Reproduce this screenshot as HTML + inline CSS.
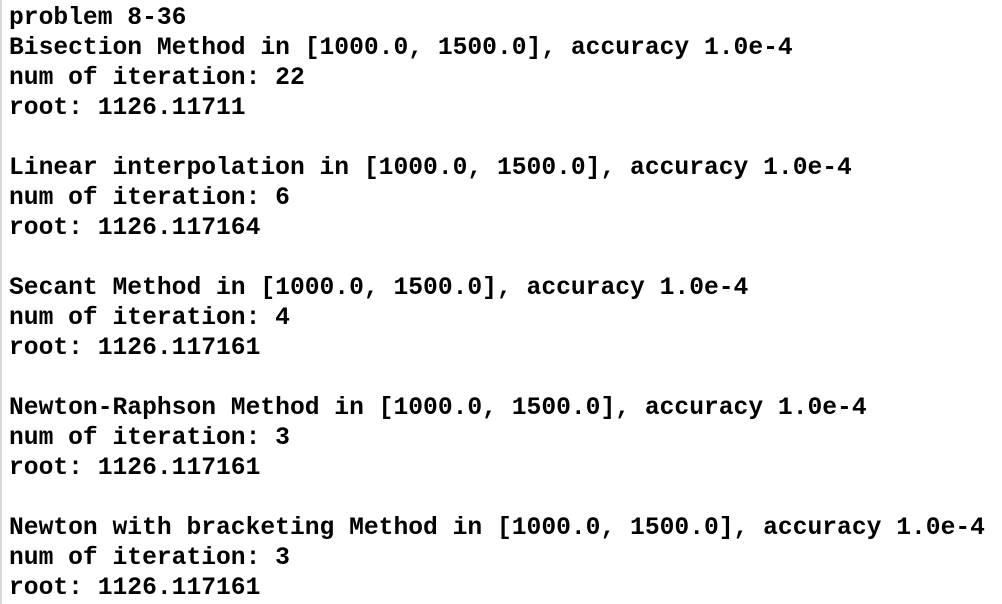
<!DOCTYPE html>
<html><head><style>
html,body{margin:0;padding:0;background:#fff;width:1002px;height:604px;overflow:hidden}
body{border-left:2px solid #d8d8d8;box-sizing:border-box}
pre{margin:0;padding:3px 0 0 7px;font-family:"Liberation Mono",monospace;font-weight:bold;font-size:24.65px;line-height:30px;color:#000}
</style></head><body><pre>problem 8-36
Bisection Method in [1000.0, 1500.0], accuracy 1.0e-4
num of iteration: 22
root: 1126.11711

Linear interpolation in [1000.0, 1500.0], accuracy 1.0e-4
num of iteration: 6
root: 1126.117164

Secant Method in [1000.0, 1500.0], accuracy 1.0e-4
num of iteration: 4
root: 1126.117161

Newton-Raphson Method in [1000.0, 1500.0], accuracy 1.0e-4
num of iteration: 3
root: 1126.117161

Newton with bracketing Method in [1000.0, 1500.0], accuracy 1.0e-4
num of iteration: 3
root: 1126.117161</pre></body></html>
